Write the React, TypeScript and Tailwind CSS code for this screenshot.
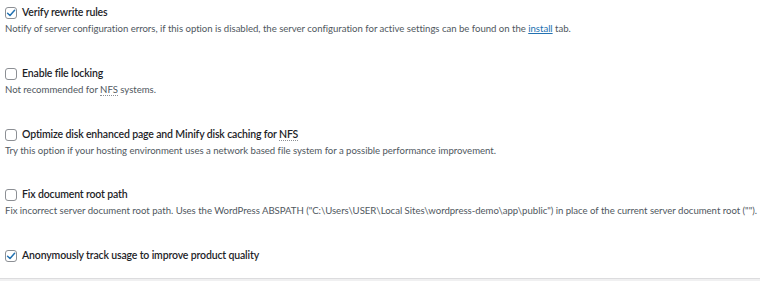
import React from "react";

function Box({ checked }: { checked?: boolean }) {
  return (
    <span className="flex h-[12px] w-[12px] shrink-0 items-center justify-center rounded-[3px] border border-[#8c8f94] bg-white">
      {checked && (
        <svg width="10" height="10" viewBox="0 0 10 10" fill="none">
          <path d="M1.6 5.2 L4 7.5 L8.6 2.3" stroke="#2271b1" strokeWidth="1.5" strokeLinecap="round" strokeLinejoin="round" />
        </svg>
      )}
    </span>
  );
}

function Nfs() {
  return <abbr className="no-underline border-b border-dotted border-[#8c8f94]" title="Network File System">NFS</abbr>;
}

function Item({ checked, title, desc }: { checked?: boolean; title: React.ReactNode; desc?: React.ReactNode }) {
  return (
    <div className="flex flex-col">
      <div className="flex h-[16px] items-center gap-[5px]">
        <Box checked={checked} />
        <span className="text-[10.5px] font-semibold tracking-[-0.15px] text-[#1d2327]">{title}</span>
      </div>
      {desc && <div className="h-[16px] leading-[16px] text-[9.6px] tracking-[-0.025px] text-[#50575e] whitespace-nowrap">{desc}</div>}
    </div>
  );
}

export default function App() {
  return (
    <div className="flex h-[281px] w-[760px] flex-col overflow-hidden bg-white" style={{ fontFamily: 'Lato, sans-serif' }}>
      <div className="flex flex-col gap-[28.75px] px-[5px] pt-[5px]">
        <Item
          checked
          title="Verify rewrite rules"
          desc={
            <>
              Notify of server configuration errors, if this option is disabled, the server configuration for active settings can be found on the{" "}
              <a className="text-[#2271b1] underline">install</a> tab.
            </>
          }
        />
        <Item title="Enable file locking" desc={<>Not recommended for <Nfs /> systems.</>} />
        <Item
          title={<>Optimize disk enhanced page and Minify disk caching for <Nfs /></>}
          desc="Try this option if your hosting environment uses a network based file system for a possible performance improvement."
        />
        <Item
          title="Fix document root path"
          desc={'Fix incorrect server document root path. Uses the WordPress ABSPATH ("C:\\Users\\USER\\Local Sites\\wordpress-demo\\app\\public") in place of the current server document root ("").'}
        />
        <Item checked title="Anonymously track usage to improve product quality" />
      </div>
      <div className="mt-auto h-[3px] border-t border-[#dcdcde] bg-[#f0f0f1]" />
    </div>
  );
}
